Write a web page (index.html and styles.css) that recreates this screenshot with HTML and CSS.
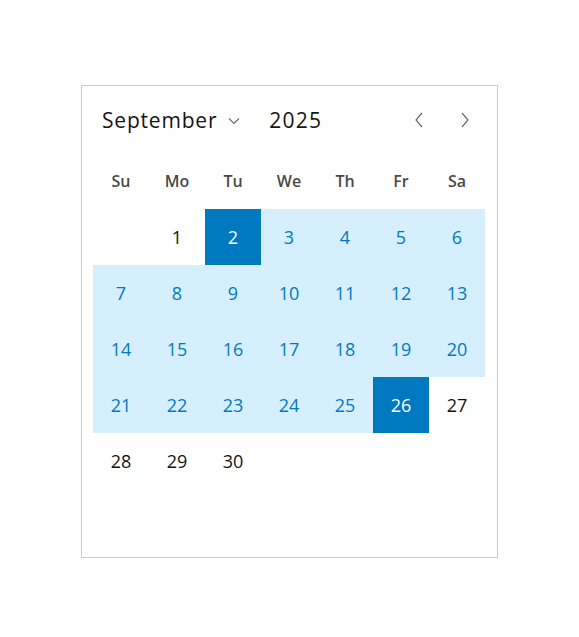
FILE: index.html
```html
<!DOCTYPE html>
<html lang="en">
<head>
<meta charset="utf-8">
<link rel="stylesheet" href="styles.css">
</head>
<body>
<div class="page">
  <div class="calendar">
    <div class="header">
      <div class="month">September
        <svg class="chev" width="12" height="8" viewBox="0 0 12 8"><path d="M1 1.5 L6 6.5 L11 1.5" fill="none" stroke="#6a6a6a" stroke-width="1.1"/></svg>
      </div>
      <div class="year">2025</div>
      <div class="nav">
        <button class="navbtn"><svg width="10" height="16" viewBox="0 0 10 16"><path d="M8 1 L2 8 L8 15" fill="none" stroke="#6a6a6a" stroke-width="1.2"/></svg></button>
        <button class="navbtn"><svg width="10" height="16" viewBox="0 0 10 16"><path d="M2 1 L8 8 L2 15" fill="none" stroke="#6a6a6a" stroke-width="1.2"/></svg></button>
      </div>
    </div>
    <div class="weekdays">
      <div>Su</div><div>Mo</div><div>Tu</div><div>We</div><div>Th</div><div>Fr</div><div>Sa</div>
    </div>
    <div class="days">
      <div class="day empty"></div>
      <div class="day">1</div>
      <div class="day sel">2</div>
      <div class="day range">3</div>
      <div class="day range">4</div>
      <div class="day range">5</div>
      <div class="day range">6</div>
      <div class="day range">7</div>
      <div class="day range">8</div>
      <div class="day range">9</div>
      <div class="day range">10</div>
      <div class="day range">11</div>
      <div class="day range">12</div>
      <div class="day range">13</div>
      <div class="day range">14</div>
      <div class="day range">15</div>
      <div class="day range">16</div>
      <div class="day range">17</div>
      <div class="day range">18</div>
      <div class="day range">19</div>
      <div class="day range">20</div>
      <div class="day range">21</div>
      <div class="day range">22</div>
      <div class="day range">23</div>
      <div class="day range">24</div>
      <div class="day range">25</div>
      <div class="day sel">26</div>
      <div class="day">27</div>
      <div class="day">28</div>
      <div class="day">29</div>
      <div class="day">30</div>
      <div class="day empty"></div>
      <div class="day empty"></div>
      <div class="day empty"></div>
      <div class="day empty"></div>
      <div class="day empty"></div>
      <div class="day empty"></div>
      <div class="day empty"></div>
      <div class="day empty"></div>
      <div class="day empty"></div>
      <div class="day empty"></div>
      <div class="day empty"></div>
    </div>
  </div>
</div>
</body>
</html>
```
FILE: styles.css
```css
html, body {
  margin: 0;
  padding: 0;
  background: #ffffff;
}
body {
  font-family: "Open Sans", "Noto Sans", sans-serif;
  color: #151515;
}
.page {
  padding: 85px 0 0 81px;
}
.calendar {
  width: 392px;
  padding: 12px 12px 12px 11px;
  border: 1px solid #cacaca;
  box-sizing: content-box;
}
.header {
  display: flex;
  align-items: center;
  height: 43px;
  padding: 0 0 0 9px;
  margin-bottom: 12px;
}
.month {
  font-size: 21px;
  letter-spacing: 0.8px;
  display: flex;
  align-items: center;
  gap: 11px;
}
.chev {
  margin-top: 2px;
}
.year {
  font-size: 21px;
  letter-spacing: 1.2px;
  margin-left: 29px;
}
.nav {
  margin-left: auto;
  display: flex;
  gap: 6px;
}
.navbtn {
  width: 40px;
  height: 40px;
  border: 0;
  background: transparent;
  padding: 0;
  display: flex;
  align-items: center;
  justify-content: center;
}
.weekdays {
  display: grid;
  grid-template-columns: repeat(7, 56px);
  height: 56px;
}
.weekdays div {
  display: flex;
  align-items: center;
  justify-content: center;
  font-size: 16px;
  font-weight: 600;
  color: #4a4a4a;
  padding-bottom: 1px;
}
.days {
  display: grid;
  grid-template-columns: repeat(7, 56px);
  grid-auto-rows: 56px;
}
.day {
  display: flex;
  align-items: center;
  justify-content: center;
  font-size: 18px;
  color: #151515;
}
.range {
  background: #d6efff;
  color: #0079c1;
}
.sel {
  background: #0079c1;
  color: #ffffff;
  font-weight: 500;
}
```
